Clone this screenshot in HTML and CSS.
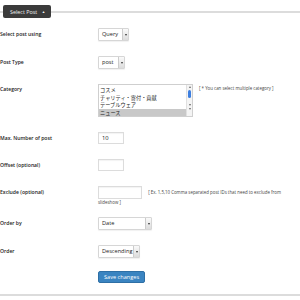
FILE: index.html
```html
<!DOCTYPE html>
<html lang="en">
<head>
    <meta charset="UTF-8">
    <meta name="viewport" content="width=device-width, initial-scale=1.0">
    <title>Select Post</title>
    <link rel="stylesheet" href="styles.css">
</head>
<body>
    <div class="panel">
        <div class="panel-head">
            <span class="rule rule-left"></span>
            <span class="tab">Select Post <span class="caret">&#9650;</span></span>
            <span class="rule"></span>
        </div>

        <form class="settings">
            <div class="row">
                <label>Select post using</label>
                <div class="field">
                    <div class="select w-query"><span class="value">Query</span><span class="arrow"></span></div>
                </div>
            </div>

            <div class="row">
                <label>Post Type</label>
                <div class="field">
                    <div class="select w-post"><span class="value">post</span><span class="arrow"></span></div>
                </div>
            </div>

            <div class="row row-tall">
                <label>Category</label>
                <div class="field">
                    <div class="listbox">
                        <ul class="options">
                            <li>コスメ</li>
                            <li>チャリティ・寄付・貢献</li>
                            <li>テーブルウェア</li>
                            <li class="selected">ニュース</li>
                        </ul>
                        <div class="scrollbar">
                            <span class="sb-up"></span>
                            <span class="sb-thumb"></span>
                            <span class="sb-down"></span>
                            <span class="sb-down"></span>
                        </div>
                    </div>
                    <span class="hint hint-side">[ * You can select multiple category ]</span>
                </div>
            </div>

            <div class="row">
                <label>Max. Number of post</label>
                <div class="field">
                    <input type="text" class="text w-small" value="10">
                </div>
            </div>

            <div class="row">
                <label>Offset (optional)</label>
                <div class="field">
                    <input type="text" class="text w-small" value="">
                </div>
            </div>

            <div class="row">
                <label>Exclude (optional)</label>
                <div class="field field-wrap">
                    <input type="text" class="text w-wide" value="">
                    <span class="hint">[ Ex. 1,5,10 Comma separated post IDs that need to exclude from slideshow ]</span>
                </div>
            </div>

            <div class="row">
                <label>Order by</label>
                <div class="field">
                    <div class="select w-orderby"><span class="value">Date</span><span class="arrow"></span></div>
                </div>
            </div>

            <div class="row">
                <label>Order</label>
                <div class="field">
                    <div class="select w-order"><span class="value">Descending</span><span class="arrow"></span></div>
                </div>
            </div>

            <div class="row row-actions">
                <label></label>
                <div class="field">
                    <button type="submit" class="save">Save changes</button>
                </div>
            </div>
        </form>

        <div class="panel-foot"></div>
    </div>
</body>
</html>
```

FILE: styles.css
```css
body {
    margin: 0;
    background: #fff;
    font-family: "Open Sans", Arial, sans-serif;
    color: #222;
}

.panel {
    width: 300px;
    height: 300px;
    overflow: hidden;
}

.panel-head {
    display: flex;
    align-items: center;
    padding-top: 5px;
    height: 13px;
}

.rule {
    flex: 1;
    height: 2px;
    background: #dcdcdc;
}

.rule-left {
    flex: 0 0 3px;
}

.tab {
    background: #3b3b3b;
    color: #f2f2f2;
    font-size: 5.4px;
    height: 13px;
    line-height: 13px;
    padding: 0 6px 0 7px;
    border-radius: 2px;
    white-space: nowrap;
}

.tab .caret {
    font-size: 3.6px;
    margin-left: 3px;
    vertical-align: 1px;
}

.settings {
    display: flex;
    flex-direction: column;
    gap: 15px;
    margin-top: 10px;
}

.row {
    display: flex;
    align-items: flex-start;
}

.row label {
    flex: 0 0 98px;
    font-size: 5.1px;
    font-weight: 600;
    line-height: 12px;
    white-space: nowrap;
    color: #1a1a1a;
}

.row-tall label {
    line-height: 8px;
    padding-top: 1px;
}

.row-actions {
    margin-top: -2px;
}

.field {
    display: flex;
    align-items: flex-start;
}

.select {
    display: flex;
    height: 11px;
    border: 1px solid #d6d6d6;
    border-radius: 1px;
    background: #fff;
    box-shadow: 0 1px 1px rgba(0, 0, 0, 0.06);
    font-size: 5.6px;
    line-height: 11px;
}

.select .value {
    flex: 1;
    padding-left: 3px;
    color: #222;
}

.select .arrow {
    width: 5px;
    border-left: 1px solid #ccc;
    background: linear-gradient(#fafafa, #dcdcdc);
    display: flex;
    align-items: center;
    justify-content: center;
}

.select .arrow::after {
    content: "";
    border-left: 1.5px solid transparent;
    border-right: 1.5px solid transparent;
    border-top: 2px solid #333;
}

.w-query { width: 29px; }
.w-post { width: 25px; }
.w-orderby { width: 52px; }
.w-order { width: 40px; }

.listbox {
    display: flex;
    width: 93px;
    height: 31px;
    border: 1px solid #cfcfcf;
    background: #fff;
}

.options {
    flex: 1;
    list-style: none;
    margin: 0;
    padding: 1px 0 0;
    font-family: "Noto Sans CJK JP", sans-serif;
    font-size: 5.2px;
}

.options li {
    height: 7.5px;
    line-height: 7.5px;
    padding-left: 1px;
    color: #222;
}

.options li.selected {
    background: #c8c8c8;
}

.scrollbar {
    width: 5px;
    display: flex;
    flex-direction: column;
    align-items: center;
    padding-top: 1px;
    gap: 2px;
    background: #f4f4f4;
    border-left: 1px solid #e0e0e0;
}

.sb-up::after,
.sb-down::after {
    content: "";
    display: block;
    border-left: 1.5px solid transparent;
    border-right: 1.5px solid transparent;
}

.sb-up::after {
    border-bottom: 2px solid #666;
}

.sb-down::after {
    border-top: 2px solid #666;
}

.sb-thumb {
    width: 3px;
    height: 8px;
    border-radius: 2px;
    background: #3d7fe0;
    margin-bottom: 4px;
}

.hint {
    font-size: 4.4px;
    color: #444;
    line-height: 8px;
}

.hint-side {
    margin-left: 6px;
}

.text {
    box-sizing: border-box;
    height: 12px;
    margin: 0;
    padding: 0 3px;
    border: 1px solid #dcdcdc;
    box-shadow: inset 0 1px 1px rgba(0, 0, 0, 0.05);
    font-family: "Open Sans", Arial, sans-serif;
    font-size: 5.8px;
    color: #222;
}

.w-small { width: 26px; }
.w-wide { width: 44px; height: 13px; }

.field-wrap {
    display: block;
    width: 188px;
    font-size: 4.4px;
    line-height: 7px;
    margin-bottom: -4px;
}

.field-wrap .text {
    vertical-align: middle;
    margin-right: 5px;
}

.field-wrap .hint {
    line-height: 7px;
}

.save {
    height: 12px;
    padding: 0 5px;
    border: 1px solid #2e6fa5;
    border-radius: 2px;
    background: #3a84c1;
    color: #fff;
    font-family: "Open Sans", Arial, sans-serif;
    font-size: 5.6px;
    line-height: 10px;
    cursor: pointer;
}

.panel-foot {
    margin-top: 11px;
    height: 2px;
    background: #dcdcdc;
}
```
